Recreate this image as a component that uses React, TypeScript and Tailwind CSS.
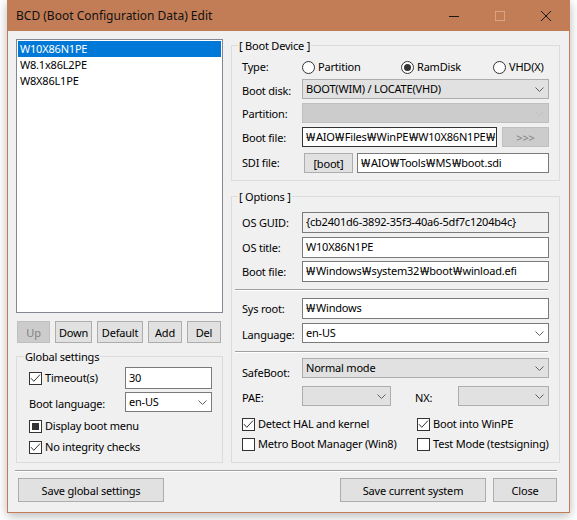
import React from 'react'

const FONT = "font-['Noto_Sans','Noto_Sans_CJK_KR',sans-serif]"

// Korean code page shows the backslash as a wide won sign
function Path({ t }: { t: string }) {
  const parts = t.split('₩')
  return (
    <>
      {parts.map((p, i) => (
        <React.Fragment key={i}>
          {i > 0 && (
            <span className="inline-block w-[10px] text-center">
              <span className="inline-block scale-x-[1.25]">₩</span>
            </span>
          )}
          {p}
        </React.Fragment>
      ))}
    </>
  )
}

type BtnProps = { w: string; children: React.ReactNode; disabled?: boolean; h?: string }

function Btn({ w, children, disabled, h = 'h-full' }: BtnProps) {
  return (
    <button
      className={`${w} ${h} shrink-0 border flex items-center justify-center leading-none ${
        disabled
          ? 'bg-[#cccccc] border-[#bfbfbf] text-[#838383]'
          : 'bg-[#e1e1e1] border-[#adadad] text-black'
      }`}
    >
      {children}
    </button>
  )
}

function Check({ checked, mixed }: { checked?: boolean; mixed?: boolean }) {
  return (
    <span className="w-[13px] h-[13px] shrink-0 border border-[#333333] bg-white flex items-center justify-center">
      {checked && (
        <svg width="11" height="11" viewBox="0 0 11 11">
          <path d="M1 5.2 L3.8 8.3 L10 1.6" fill="none" stroke="#333333" strokeWidth="1" />
        </svg>
      )}
      {mixed && <span className="w-[7px] h-[7px] bg-[#333333]" />}
    </span>
  )
}

function CheckItem({ label, checked, mixed, w }: { label: string; checked?: boolean; mixed?: boolean; w?: string }) {
  return (
    <div className={`flex items-center gap-[3px] ${w ?? ''}`}>
      <Check checked={checked} mixed={mixed} />
      <span className="whitespace-nowrap">{label}</span>
    </div>
  )
}

function Radio({ label, on, w }: { label: string; on?: boolean; w: string }) {
  return (
    <div className={`flex items-center gap-[3px] ${w}`}>
      <span className="w-[13px] h-[13px] shrink-0 rounded-full border border-[#333333] bg-white flex items-center justify-center">
        {on && <span className="w-[7px] h-[7px] rounded-full bg-[#333333]" />}
      </span>
      <span>{label}</span>
    </div>
  )
}

type ComboKind = 'list' | 'edit' | 'disabled'

function Combo({ w, h = 'h-[20px]', kind, text }: { w: string; h?: string; kind: ComboKind; text?: string }) {
  const look =
    kind === 'list'
      ? 'bg-[#e1e1e1] border-[#adadad]'
      : kind === 'edit'
        ? 'bg-white border-[#7a7a7a]'
        : 'bg-[#cccccc] border-[#bfbfbf]'
  const chev = kind === 'disabled' ? '#bfbfbf' : '#606060'
  return (
    <div className={`${w} ${h} shrink-0 border ${look} flex items-center pl-[3px] pr-[4px]`}>
      <span className="flex-1 whitespace-nowrap overflow-hidden">{text}</span>
      <svg width="9" height="5" viewBox="0 0 9 5" className="shrink-0">
        <path d="M0.5 0.5 L4.5 4.5 L8.5 0.5" fill="none" stroke={chev} strokeWidth="1" />
      </svg>
    </div>
  )
}

function Field({ w, h = 'h-[21px]', text, readOnly, dark }: { w: string; h?: string; text: string; readOnly?: boolean; dark?: boolean }) {
  return (
    <div
      className={`${w} ${h} shrink-0 border ${dark ? 'border-[#333333]' : 'border-[#7a7a7a]'} ${
        readOnly ? 'bg-[#f0f0f0]' : 'bg-white'
      } flex items-center pl-[3px] overflow-hidden whitespace-nowrap`}
    >
      <Path t={text} />
    </div>
  )
}

function Group({ title, h, mt, children, legendLeft }: { title: string; h: string; mt: string; children: React.ReactNode; legendLeft: string }) {
  return (
    <div className={`${mt} ${h} border border-[#dcdcdc] relative flex flex-col`}>
      <span className={`absolute -top-[8px] ${legendLeft} px-[1px] bg-[#f0f0f0] leading-[15px] whitespace-nowrap`}>
        {title}
      </span>
      {children}
    </div>
  )
}

function Etch({ className }: { className: string }) {
  return <div className={`h-[2px] border-t border-t-[#a0a0a0] border-b border-b-white ${className}`} />
}

function TitleBar() {
  return (
    <div className="h-[30px] bg-[#c27d56] flex items-center shrink-0">
      <span className="pl-[8px] flex-1 text-[12px] tracking-normal text-[#111111]">
        BCD (Boot Configuration Data) Edit
      </span>
      <div className="w-[46px] h-full flex items-center justify-center">
        <svg width="10" height="10" viewBox="0 0 10 10">
          <path d="M0 5.5 H10" stroke="#1a1a1a" strokeWidth="1" />
        </svg>
      </div>
      <div className="w-[46px] h-full flex items-center justify-center">
        <svg width="10" height="10" viewBox="0 0 10 10">
          <rect x="0.5" y="0.5" width="9" height="9" fill="none" stroke="#d9a486" strokeWidth="1" />
        </svg>
      </div>
      <div className="w-[46px] h-full flex items-center justify-center">
        <svg width="10" height="10" viewBox="0 0 10 10">
          <path d="M0 0 L10 10 M10 0 L0 10" stroke="#1a1a1a" strokeWidth="1" />
        </svg>
      </div>
    </div>
  )
}

function LeftPane() {
  const items = ['W10X86N1PE', 'W8.1x86L2PE', 'W8X86L1PE']
  return (
    <div className="w-[207px] shrink-0 flex flex-col">
      <div className="h-[274px] border border-[#828790] bg-white p-[1px]">
        {items.map((t, i) => (
          <div key={t} className={`h-[16px] leading-[16px] pl-[2px] ${i === 0 ? 'bg-[#0078d7] text-white' : ''}`}>
            {t}
          </div>
        ))}
      </div>
      <div className="mt-[8px] h-[22px] flex gap-[5px] pl-[1px]">
        <Btn w="w-[33px]" disabled>Up</Btn>
        <Btn w="w-[37px]">Down</Btn>
        <Btn w="w-[46px]">Default</Btn>
        <Btn w="w-[34px]">Add</Btn>
        <Btn w="w-[34px]">Del</Btn>
      </div>
      <Group title="Global settings" h="h-[107px]" mt="mt-[13px]" legendLeft="left-[7px]">
        <div className="pt-[10px] pl-[12px] flex flex-col">
          <div className="h-[22px] flex items-center">
            <div className="w-[96px]">
              <CheckItem label="Timeout(s)" checked />
            </div>
            <Field w="w-[87px]" h="h-[22px]" text="30" />
          </div>
          <div className="mt-[3px] h-[20px] flex items-center">
            <span className="w-[96px] pt-[4px]">Boot language:</span>
            <Combo w="w-[87px]" kind="edit" text="en-US" />
          </div>
          <div className="mt-[8px] h-[13px] flex items-center">
            <CheckItem label="Display boot menu" mixed />
          </div>
          <div className="mt-[8px] h-[13px] flex items-center">
            <CheckItem label="No integrity checks" checked />
          </div>
        </div>
      </Group>
    </div>
  )
}

function Row({ label, mt, h, children, labelPad }: { label: string; mt?: string; h: string; children: React.ReactNode; labelPad?: string }) {
  return (
    <div className={`${mt ?? ''} ${h} flex items-center`}>
      <span className={`w-[60px] shrink-0 whitespace-nowrap ${labelPad ?? ''}`}>{label}</span>
      {children}
    </div>
  )
}

function RightPane() {
  return (
    <div className="w-[329px] shrink-0 flex flex-col">
      <Group title="[ Boot Device ]" h="h-[136px]" mt="mt-[6px]" legendLeft="left-[6px]">
        <div className="pt-[11px] px-[10px] flex flex-col">
          <Row label="Type:" h="h-[20px]">
            <Radio label="Partition" w="w-[99px]" />
            <Radio label="RamDisk" on w="w-[92px]" />
            <Radio label="VHD(X)" w="w-[56px]" />
          </Row>
          <Row label="Boot disk:" h="h-[20px]" mt="mt-[2px]" labelPad="pt-[4px]">
            <Combo w="w-[247px]" kind="list" text="BOOT(WIM) / LOCATE(VHD)" />
          </Row>
          <Row label="Partition:" h="h-[20px]" mt="mt-[4px]" labelPad="pt-[2px]">
            <Combo w="w-[247px]" kind="disabled" />
          </Row>
          <Row label="Boot file:" h="h-[20px]" mt="mt-[4px]" labelPad="pt-[2px]">
            <Field w="w-[195px]" h="h-[20px]" text="₩AIO₩Files₩WinPE₩W10X86N1PE₩" dark />
            <span className="w-[5px] shrink-0" />
            <Btn w="w-[47px]" h="h-[20px]" disabled>&gt;&gt;&gt;</Btn>
          </Row>
          <div className="mt-[6px] h-[20px] flex items-center">
            <span className="w-[62px] shrink-0">SDI file:</span>
            <Btn w="w-[49px]" h="h-[20px]">[boot]</Btn>
            <span className="w-[4px] shrink-0" />
            <Field w="w-[192px]" h="h-[20px]" text="₩AIO₩Tools₩MS₩boot.sdi" />
          </div>
        </div>
      </Group>
      <Group title="[ Options ]" h="h-[267px]" mt="mt-[15px]" legendLeft="left-[6px]">
        <div className="pt-[15px] px-[10px] flex flex-col">
          <Row label="OS GUID:" h="h-[21px]" labelPad="pt-[2px]">
            <Field w="w-[247px]" text="{cb2401d6-3892-35f3-40a6-5df7c1204b4c}" readOnly />
          </Row>
          <Row label="OS title:" h="h-[21px]" mt="mt-[4px]" labelPad="pt-[2px]">
            <Field w="w-[247px]" text="W10X86N1PE" />
          </Row>
          <Row label="Boot file:" h="h-[21px]" mt="mt-[3px]" labelPad="pt-[2px]">
            <Field w="w-[247px]" text="₩Windows₩system32₩boot₩winload.efi" />
          </Row>
          <Etch className="mt-[7px] ml-[-7px] mr-[1px]" />
          <Row label="Sys root:" h="h-[21px]" mt="mt-[7px]" labelPad="pt-[2px]">
            <Field w="w-[247px]" text="₩Windows" />
          </Row>
          <Row label="Language:" h="h-[20px]" mt="mt-[4px]" labelPad="pt-[4px]">
            <Combo w="w-[247px]" kind="edit" text="en-US" />
          </Row>
          <Etch className="mt-[8px] ml-[-7px] mr-[1px]" />
          <Row label="SafeBoot:" h="h-[20px]" mt="mt-[5px]" labelPad="pt-[10px]">
            <Combo w="w-[247px]" kind="list" text="Normal mode" />
          </Row>
          <Row label="PAE:" h="h-[20px]" mt="mt-[8px]" labelPad="pt-[4px]">
            <Combo w="w-[89px]" kind="list" />
            <span className="w-[67px] shrink-0 pl-[24px] pt-[4px]">NX:</span>
            <Combo w="w-[91px]" kind="list" />
          </Row>
          <div className="mt-[12px] h-[13px] flex items-center">
            <CheckItem label="Detect HAL and kernel" checked w="w-[175px]" />
            <CheckItem label="Boot into WinPE" checked />
          </div>
          <div className="mt-[7px] h-[13px] flex items-center">
            <CheckItem label="Metro Boot Manager (Win8)" w="w-[175px]" />
            <CheckItem label="Test Mode (testsigning)" />
          </div>
        </div>
      </Group>
    </div>
  )
}

export default function App() {
  return (
    <div className={`w-[577px] h-[520px] bg-white pl-[7px] text-[11px] tracking-[-0.2px] text-black ${FONT}`}>
      <div className="w-[563px] h-[513px] border border-[#c27d56] bg-[#f0f0f0] flex flex-col shadow-[0_3px_10px_rgba(0,0,0,0.28)]">
        <TitleBar />
        <div className="flex-1 flex flex-col pt-[8px] pl-[8px] pr-[9px]">
          <div className="h-[424px] flex gap-[8px]">
            <LeftPane />
            <RightPane />
          </div>
          <Etch className="mt-[7px] ml-[-1px] mr-[3px]" />
          <div className="mt-[6px] h-[24px] flex">
            <span className="w-[2px] shrink-0" />
            <Btn w="w-[146px]">Save global settings</Btn>
            <span className="flex-1" />
            <Btn w="w-[146px]">Save current system</Btn>
            <span className="w-[7px] shrink-0" />
            <Btn w="w-[64px]">Close</Btn>
            <span className="w-[3px] shrink-0" />
          </div>
        </div>
      </div>
    </div>
  )
}
